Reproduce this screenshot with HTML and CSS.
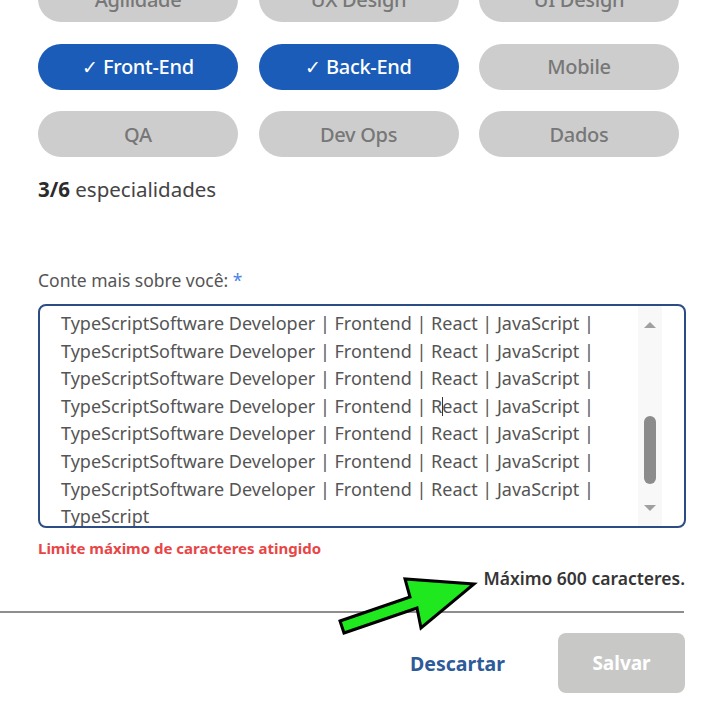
FILE: index.html
```html
<!DOCTYPE html>
<html lang="pt-BR">
<head>
<meta charset="utf-8">
<title>Especialidades</title>
<link rel="stylesheet" href="styles.css">
</head>
<body>
<div class="page">
  <div class="chips">
    <div class="chip">Agilidade</div>
    <div class="chip">UX Design</div>
    <div class="chip">UI Design</div>
    <div class="chip selected"><span class="check">✓</span>Front-End</div>
    <div class="chip selected"><span class="check">✓</span>Back-End</div>
    <div class="chip">Mobile</div>
    <div class="chip">QA</div>
    <div class="chip">Dev Ops</div>
    <div class="chip">Dados</div>
  </div>
  <p class="count"><b>3/6</b> especialidades</p>

  <label class="label">Conte mais sobre você: <span class="req">*</span></label>
  <div class="textarea">
    <div class="lines">
      <div class="line">TypeScriptSoftware Developer | Frontend | React | JavaScript |</div>
      <div class="line">TypeScriptSoftware Developer | Frontend | React | JavaScript |</div>
      <div class="line">TypeScriptSoftware Developer | Frontend | React | JavaScript |</div>
      <div class="line">TypeScriptSoftware Developer | Frontend | R<span class="caret"></span>eact | JavaScript |</div>
      <div class="line">TypeScriptSoftware Developer | Frontend | React | JavaScript |</div>
      <div class="line">TypeScriptSoftware Developer | Frontend | React | JavaScript |</div>
      <div class="line">TypeScriptSoftware Developer | Frontend | React | JavaScript |</div>
      <div class="line">TypeScript</div>
    </div>
    <div class="scrollbar">
      <span class="arrow up"></span>
      <span class="thumb"></span>
      <span class="arrow down"></span>
    </div>
  </div>
  <p class="error">Limite máximo de caracteres atingido</p>
  <p class="max">Máximo 600 caracteres.</p>
</div>
<hr class="divider">
<div class="actions">
  <button class="btn-link">Descartar</button>
  <button class="btn-save">Salvar</button>
</div>

<svg class="annot" width="720" height="720" viewBox="0 0 720 720">
  <polygon points="340,621 410,597 405,579 474,584 421,628 417,608 344,633" fill="#1fe81f" stroke="#000" stroke-width="3" stroke-linejoin="miter"/>
</svg>
</body>
</html>
```

FILE: styles.css
```css
* { box-sizing: border-box; }
html, body {
  margin: 0;
  padding: 0;
  background: #fff;
  overflow: hidden;
}
body {
  width: 720px;
  height: 720px;
  font-family: "Noto Sans", "Open Sans", sans-serif;
  color: #444;
  position: relative;
}
.page {
  padding: 0 34px 0 38px;
}
.chips {
  display: grid;
  grid-template-columns: repeat(3, 200px);
  grid-auto-rows: 46px;
  column-gap: 20.5px;
  row-gap: 21.5px;
  margin-top: -24px;
}
.chip {
  border-radius: 23px;
  background: #cdcdcd;
  color: #777;
  font-size: 20px;
  font-weight: 500;
  display: flex;
  align-items: center;
  justify-content: center;
  letter-spacing: -0.3px;
}
.chip.selected {
  background: #1a5cb8;
  color: #fff;
}
.check {
  font-size: 19px;
  font-weight: 400;
  margin-right: 5px;
}
.count {
  margin: 19px 0 0;
  font-size: 20.5px;
  line-height: 26px;
  color: #444;
}
.count b { color: #2b2b2b; }
.label {
  display: block;
  margin-top: 66px;
  font-size: 17.5px;
  line-height: 24px;
  color: #555;
}
.req { color: #4f82e6; }
.textarea {
  margin-top: 12px;
  width: 648px;
  height: 224px;
  border: 2px solid #2c4d84;
  border-radius: 8px;
  overflow: hidden;
  display: flex;
}
.lines {
  flex: 1;
  padding: 4px 0 0 21px;
  font-size: 18px;
  line-height: 27.6px;
  color: #555;
  white-space: nowrap;
  overflow: hidden;
}
.caret {
  display: inline-block;
  width: 1px;
  height: 19px;
  background: #333;
  vertical-align: -3px;
  margin: 0 -1px 0 0;
}
.scrollbar {
  width: 24px;
  flex: none;
  margin-right: 22px;
  background: #f8f8f8;
  display: flex;
  flex-direction: column;
  align-items: center;
  padding-top: 16px;
}
.arrow {
  width: 0;
  height: 0;
  border-left: 6px solid transparent;
  border-right: 6px solid transparent;
}
.arrow.up { border-bottom: 6px solid #a0a0a0; }
.arrow.down { border-top: 6px solid #a0a0a0; margin-top: 21px; }
.thumb {
  width: 12px;
  height: 68px;
  border-radius: 6px;
  background: #8c8c8c;
  margin-top: 88px;
}
.error {
  margin: 9px 0 0;
  font-size: 15px;
  line-height: 22px;
  font-weight: 700;
  color: #e84646;
}
.max {
  margin: 8px 0 0;
  text-align: right;
  font-size: 17.5px;
  line-height: 22px;
  font-weight: 600;
  color: #353535;
  padding-right: 1px;
}
.divider {
  margin: 22px 0 0;
  width: 684px;
  border: 0;
  border-top: 2px solid #8e8e8e;
}
.actions {
  display: flex;
  justify-content: flex-end;
  align-items: center;
  gap: 53px;
  padding-right: 35px;
  margin-top: 20px;
}
.btn-link {
  border: 0;
  background: none;
  padding: 0;
  font-family: inherit;
  font-size: 19.5px;
  font-weight: 700;
  color: #2d5a99;
}
.btn-save {
  width: 127px;
  height: 60px;
  border: 0;
  border-radius: 8px;
  background: #c8c9c7;
  color: #fff;
  font-family: inherit;
  font-size: 19px;
  font-weight: 700;
}
.annot {
  position: absolute;
  left: 0;
  top: 0;
  pointer-events: none;
}
```
